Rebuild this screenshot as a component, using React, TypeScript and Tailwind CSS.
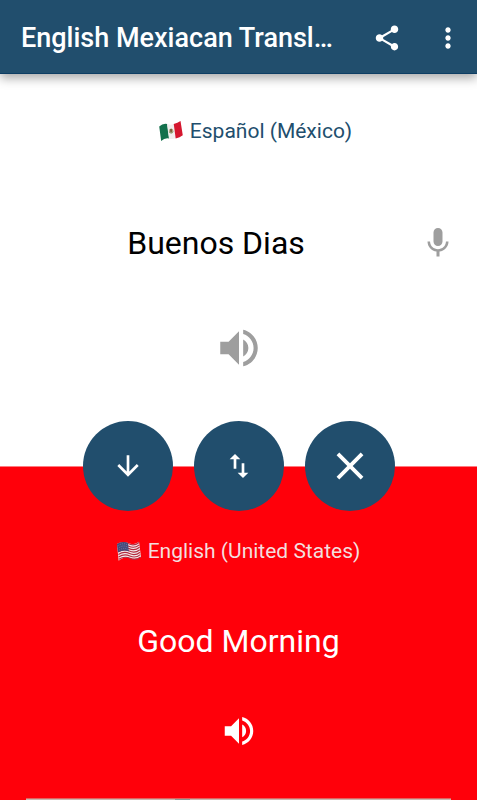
import React from 'react';

interface IconProps {
  path: string;
  className: string;
}

const icons = {
  share:
    'M18 16.08c-.76 0-1.44.3-1.96.77L8.91 12.7c.05-.23.09-.46.09-.7s-.04-.47-.09-.7l7.05-4.11c.54.5 1.25.81 2.04.81 1.66 0 3-1.34 3-3s-1.34-3-3-3-3 1.34-3 3c0 .24.04.47.09.7L8.04 9.81C7.5 9.31 6.79 9 6 9c-1.66 0-3 1.34-3 3s1.34 3 3 3c.79 0 1.5-.31 2.04-.81l7.12 4.16c-.05.21-.08.43-.08.65 0 1.61 1.31 2.92 2.92 2.92s2.92-1.31 2.92-2.92-1.31-2.92-2.92-2.92z',
  more:
    'M12 8c1.1 0 2-.9 2-2s-.9-2-2-2-2 .9-2 2 .9 2 2 2zm0 2c-1.1 0-2 .9-2 2s.9 2 2 2 2-.9 2-2-.9-2-2-2zm0 6c-1.1 0-2 .9-2 2s.9 2 2 2 2-.9 2-2-.9-2-2-2z',
  mic:
    'M12 14c1.66 0 2.99-1.34 2.99-3L15 5c0-1.66-1.34-3-3-3S9 3.34 9 5v6c0 1.66 1.34 3 3 3zm5.3-3c0 3-2.54 5.1-5.3 5.1S6.7 14 6.7 11H5c0 3.41 2.72 6.23 6 6.72V21h2v-3.28c3.28-.48 6-3.3 6-6.72h-1.7z',
  volume:
    'M3 9v6h4l5 5V4L7 9H3zm13.5 3c0-1.77-1.02-3.29-2.5-4.03v8.05c1.48-.73 2.5-2.25 2.5-4.02zM14 3.23v2.06c2.89.86 5 3.54 5 6.71s-2.11 5.85-5 6.71v2.06c4.01-.91 7-4.49 7-8.77s-2.99-7.86-7-8.77z',
  down: 'M20 12l-1.41-1.41L13 16.17V4h-2v12.17l-5.58-5.59L4 12l8 8 8-8z',
  swap: 'M16 17.01V10h-2v7.01h-3L15 21l4-3.99h-3zM9 3L5 6.99h3V14h2V6.99h3L9 3z',
  close:
    'M19 6.41L17.59 5 12 10.59 6.41 5 5 6.41 10.59 12 5 17.59 6.41 19 12 13.41 17.59 19 19 17.59 13.41 12z',
};

function Icon({ path, className }: IconProps) {
  return (
    <svg viewBox="0 0 24 24" fill="currentColor" className={className} aria-hidden="true">
      <path d={path} />
    </svg>
  );
}

function MexicoFlag() {
  return (
    <svg viewBox="0 0 73 62" className="w-6 h-5 shrink-0" aria-hidden="true">
      <path d="M0 17Q11 6 25 9L31 54Q17 51 6 62Z" fill="#13714d" />
      <path d="M24 9Q36 14 46 9L52 53Q40 58 30 54Z" fill="#f1eeee" />
      <path d="M45 9Q57 6 66 0L73 44Q64 51 51 54Z" fill="#d5172f" />
      <ellipse cx="37" cy="31" rx="7" ry="8" fill="#b9a984" />
      <path d="M33 26q5-5 7 1l-1 9q-6-1-6-10z" fill="#79603a" />
      <path d="M30 34q7 8 14-1" fill="none" stroke="#6f9a6c" strokeWidth="2" />
    </svg>
  );
}

function UnitedStatesFlag() {
  const stripes = [0, 1, 2, 3, 4, 5, 6];

  return (
    <svg viewBox="0 0 73 60" className="w-6 h-5 shrink-0" aria-hidden="true">
      <path d="M0 9Q17-2 34 6T67 2L73 48Q55 58 39 51T5 60Z" fill="#f3eeee" />
      {stripes.map(i => (
        <path
          key={i}
          d="M1 11Q18 0 35 8T67 4"
          fill="none"
          stroke="#b52a40"
          strokeWidth="3.6"
          transform={`translate(${i * 0.8} ${i * 7.4})`}
        />
      ))}
      <path d="M0 9Q17-2 33 6L36 31Q20 24 3 34Z" fill="#454a7b" />
      <path
        d="M5 13Q18 4 31 11M6 20Q19 11 32 18M7 27Q20 18 33 25"
        fill="none"
        stroke="#a9aac6"
        strokeWidth="2"
        strokeDasharray="2 4"
      />
    </svg>
  );
}

function App() {
  const roundButton =
    'w-[90px] h-[90px] rounded-full bg-[#214e6d] text-white flex items-center justify-center';

  return (
    <div className="min-h-screen flex flex-col bg-white font-[Roboto,sans-serif]">
      {/* App bar */}
      <header className="h-[74px] pt-[2px] pl-[21px] pr-[13px] flex items-center bg-[#214e6d] border-b border-[#0d3d63] text-white shadow-[0_4px_10px_rgba(0,0,0,0.35)]">
        <h1 className="flex-1 min-w-0 truncate text-[27px] leading-8 font-medium">English Mexiacan Transl…</h1>
        <button aria-label="Share" className="mr-[30px]">
          <Icon path={icons.share} className="w-[30px] h-[30px]" />
        </button>
        <button aria-label="More options">
          <Icon path={icons.more} className="w-8 h-8" />
        </button>
      </header>

      <main className="flex-1 flex flex-col">
        {/* Source language */}
        <section className="h-[392px] pt-[41px] flex flex-col items-center">
          <div className="h-8 pl-[34px] flex items-center gap-[7px] text-[#214e6d]">
            <MexicoFlag />
            <p className="text-[21px] leading-8">Español (México)</p>
          </div>
          <div className="w-full mt-[76px] pl-3 pr-[21px] flex items-center">
            <p className="flex-1 text-center text-[32px] leading-10 text-black">Buenos Dias</p>
            <button aria-label="Speak" className="text-[#9e9e9e]">
              <Icon path={icons.mic} className="w-9 h-9" />
            </button>
          </div>
          <button aria-label="Listen in Spanish" className="mt-[60px] text-[#9e9e9e]">
            <Icon path={icons.volume} className="w-[50px] h-[50px]" />
          </button>
        </section>

        {/* Translation */}
        <section className="flex-1 flex flex-col items-center bg-[#ff000a] border-t border-[#ff7a7f] text-white">
          <div className="-mt-[46px] flex justify-center gap-[21px]">
            <button aria-label="Translate" className={roundButton}>
              <Icon path={icons.down} className="w-8 h-8" />
            </button>
            <button aria-label="Swap languages" className={roundButton}>
              <Icon path={icons.swap} className="w-8 h-8" />
            </button>
            <button aria-label="Clear" className={roundButton}>
              <Icon path={icons.close} className="w-[46px] h-[46px]" />
            </button>
          </div>
          <div className="h-8 mt-6 flex items-center gap-[7px] text-[#f3dede]">
            <UnitedStatesFlag />
            <p className="text-[21px] leading-8">English (United States)</p>
          </div>
          <p className="mt-[54px] text-[32px] leading-10">Good Morning</p>
          <button aria-label="Listen in English" className="mt-[51px]">
            <Icon path={icons.volume} className="w-[38px] h-[38px]" />
          </button>
          <div className="w-full mt-auto px-[26px]">
            <div className="h-[2px] flex bg-[#c9b5ae] border-t border-[#e0625f]">
              <span className="w-[35%]" />
              <span className="w-[15px] bg-[#8a9a96]" />
            </div>
          </div>
        </section>
      </main>
    </div>
  );
}

export default App;
